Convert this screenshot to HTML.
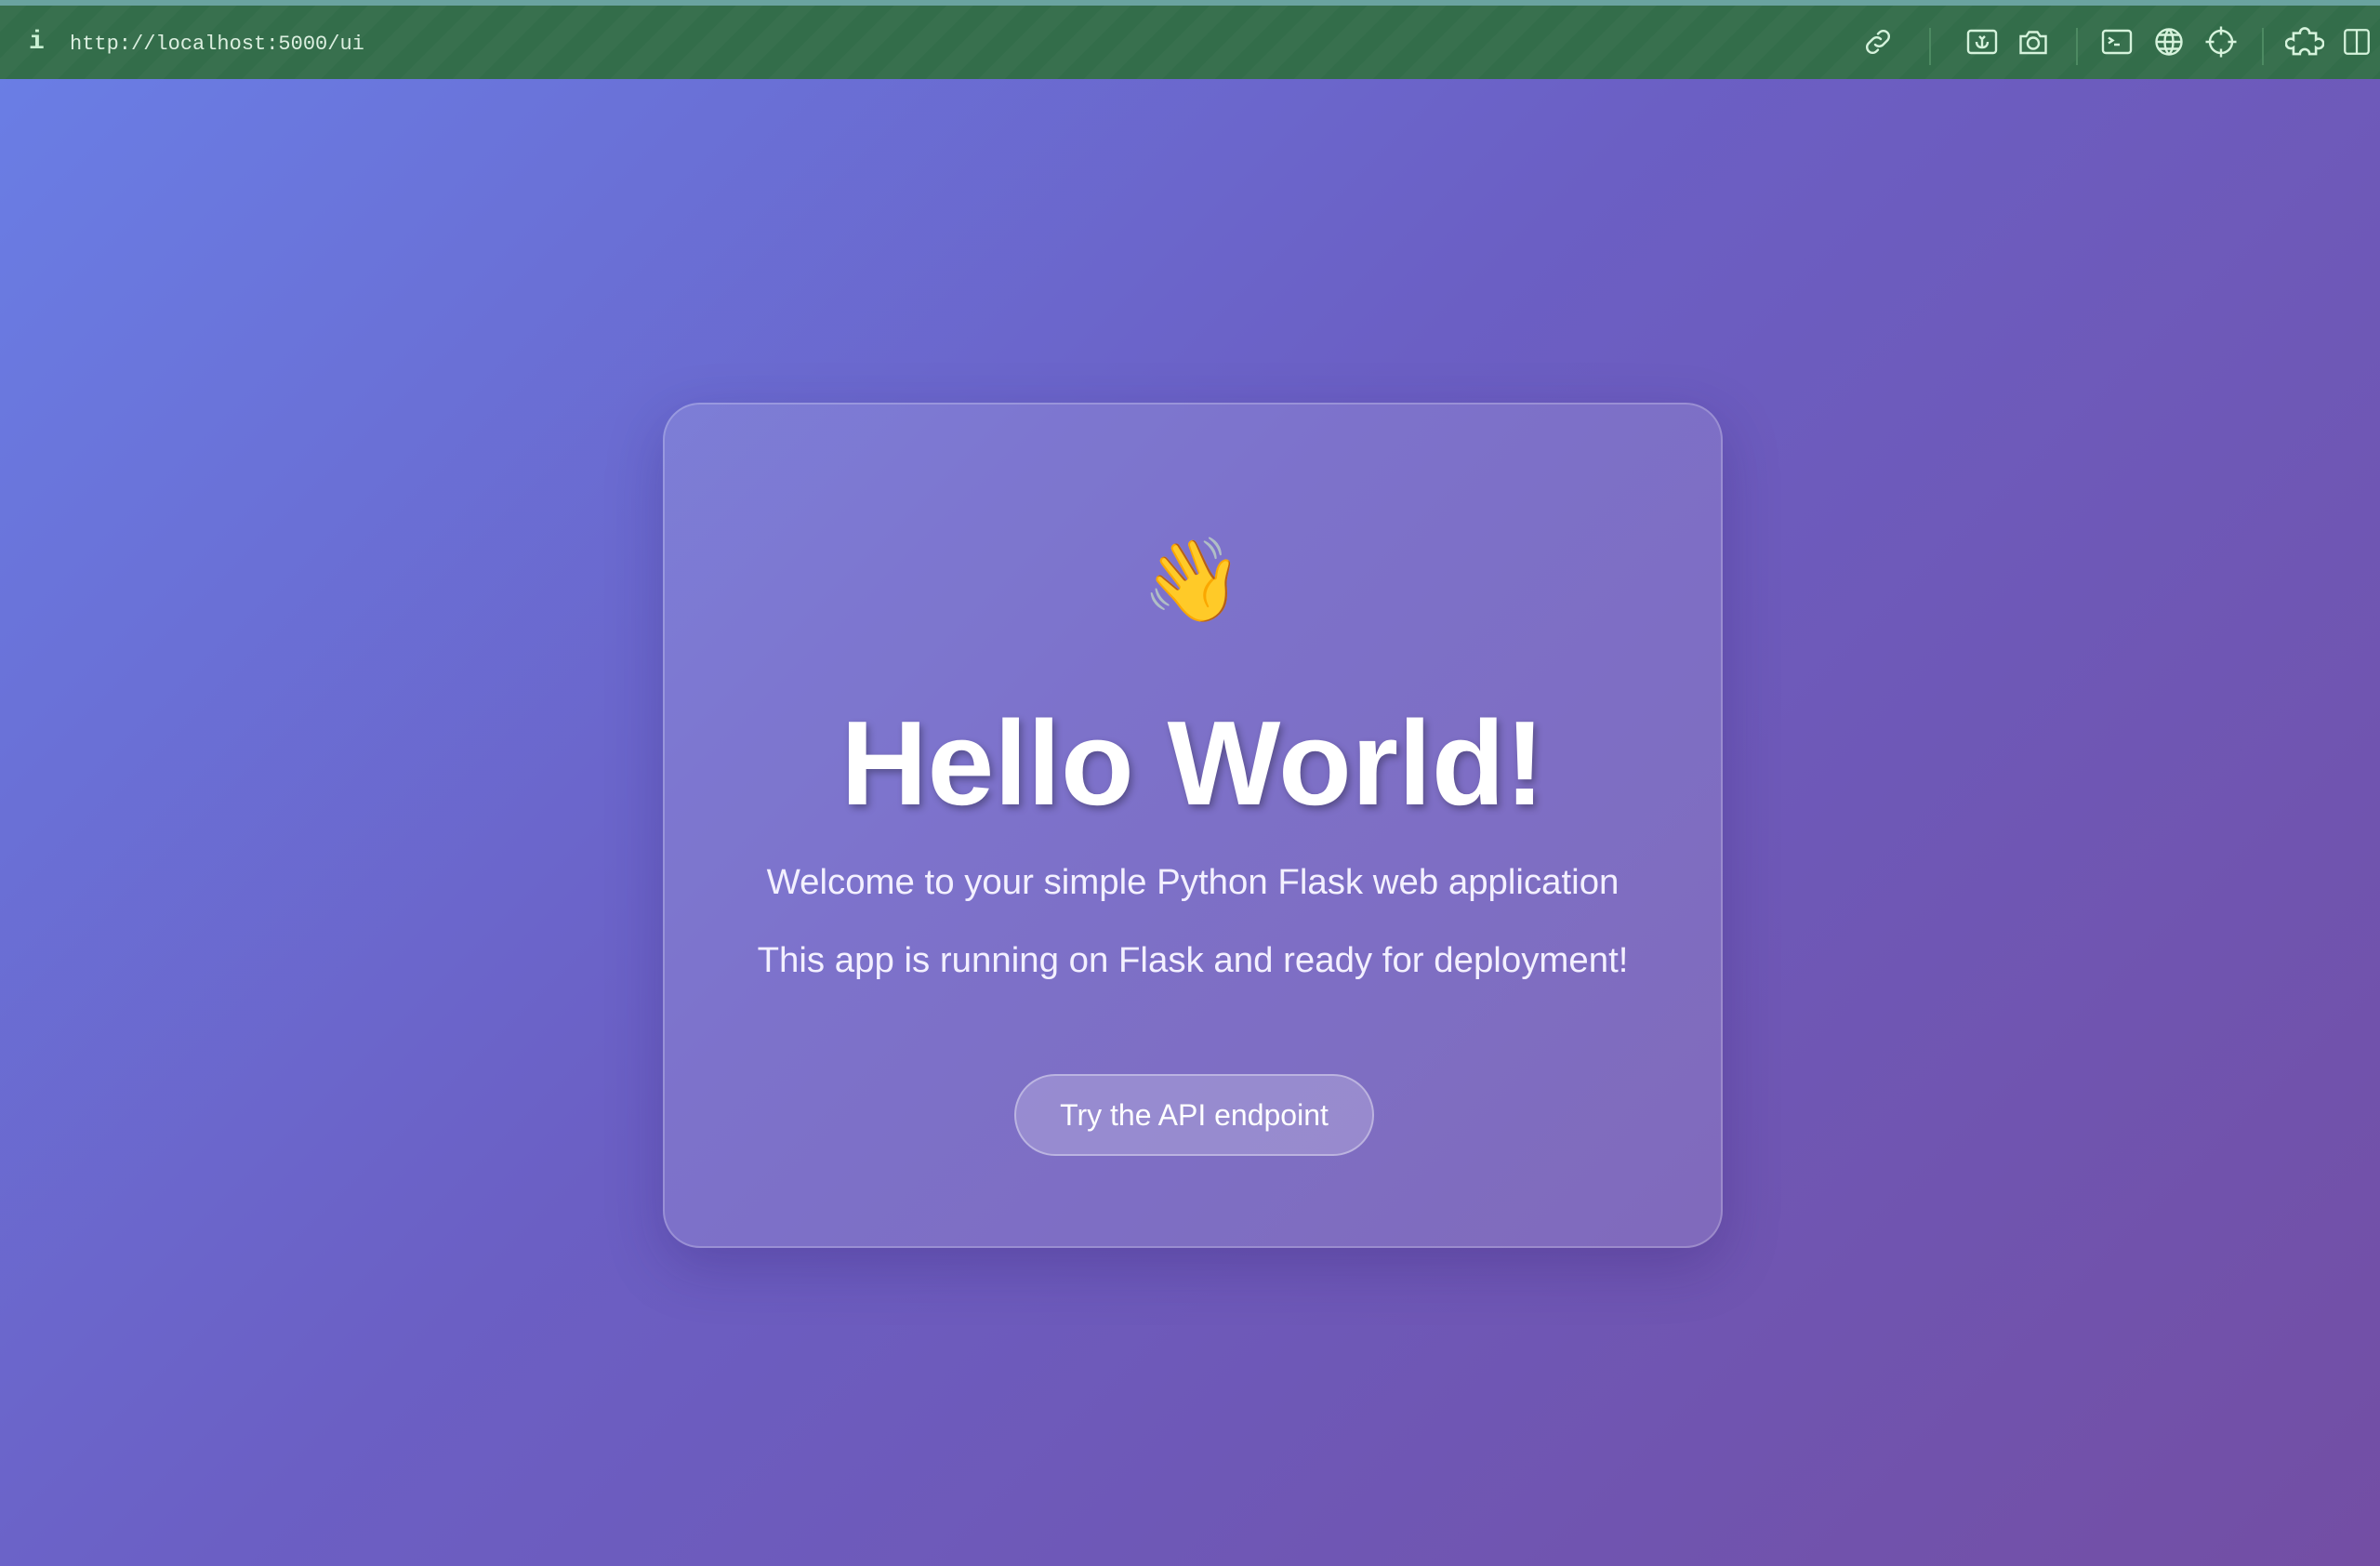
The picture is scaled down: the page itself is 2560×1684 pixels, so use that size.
<!DOCTYPE html>
<html><head><meta charset="utf-8"><style>
*{margin:0;padding:0;box-sizing:border-box}
html,body{width:2560px;height:1684px;overflow:hidden}
body{background:linear-gradient(135deg,#6a7fe6 0%,#6b5fc4 45%,#734ea4 100%);font-family:"Liberation Sans",Arial,sans-serif;position:relative}
.top{position:absolute;left:0;top:0;width:2560px;height:6px;background:#6aa3a0}
.bar{position:absolute;left:0;top:6px;width:2560px;height:79px;background:#336d4a;background-image:repeating-linear-gradient(135deg,rgba(255,255,255,0.025) 0 20px,rgba(0,0,0,0) 20px 40px)}
.info{position:absolute;left:31px;top:24px;color:#c9f0d2;font:bold 28px "Liberation Mono",monospace}
.url{position:absolute;left:75px;top:29px;color:#dcefe0;font:22px "Liberation Mono",monospace}
.ic{position:absolute;top:21px}
.sep{position:absolute;top:24px;width:2px;height:40px;background:#4d8a62}
.card{position:absolute;left:713px;top:433px;width:1140px;height:909px;border-radius:40px;background:rgba(255,255,255,0.12);border:2px solid rgba(255,255,255,0.22);box-shadow:0 20px 60px rgba(40,20,100,0.25);text-align:center;color:#fff}
.emoji{position:absolute;left:0;right:0;top:140px;font-size:88px;line-height:100px;font-family:"Noto Color Emoji","DejaVu Sans",sans-serif}
h1{position:absolute;left:0;right:0;top:306px;font-size:129px;font-weight:bold;line-height:160px;text-shadow:3px 4px 8px rgba(0,0,0,0.3)}
p{position:absolute;left:0;right:0;font-size:38.4px;line-height:44px;color:#f3f0ff}
.btn{position:absolute;left:376px;top:720px;width:387px;height:88px;border-radius:44px;background:rgba(255,255,255,0.2);border:2px solid rgba(255,255,255,0.35);font-size:32px;line-height:84px;color:#fff}
</style></head><body>
<div class="top"></div>
<div class="bar">
<div class="info">i</div>
<div class="url">http://localhost:5000/ui</div>
<svg class="ic" style="left:2002px" width="36" height="36" viewBox="0 0 24 24" fill="none" stroke="#d6f3dc" stroke-width="1.6" stroke-linecap="round"><path d="M10 14a4 4 0 0 0 5.7 0l3-3a4 4 0 0 0-5.7-5.7l-1 1"/><path d="M14 10a4 4 0 0 0-5.7 0l-3 3a4 4 0 0 0 5.7 5.7l1-1"/></svg>
<div class="sep" style="left:2075px"></div>
<svg class="ic" style="left:2114px" width="36" height="36" viewBox="0 0 24 24" fill="none" stroke="#d6f3dc" stroke-width="1.6"><rect x="2" y="4" width="20" height="16" rx="2"/><path d="M8 12c0 3 2 4 4 4s4-1 4-4M12 16v-6M10 8l2 2 2-2" /></svg>
<svg class="ic" style="left:2169px" width="36" height="36" viewBox="0 0 24 24" fill="none" stroke="#d6f3dc" stroke-width="1.6"><path d="M3 8h4l2-3h6l2 3h4v12H3z"/><circle cx="12" cy="13" r="4"/></svg>
<div class="sep" style="left:2233px"></div>
<svg class="ic" style="left:2259px" width="36" height="36" viewBox="0 0 24 24" fill="none" stroke="#d6f3dc" stroke-width="1.6"><rect x="2" y="4" width="20" height="16" rx="2"/><path d="M6 9l3 2-3 2M10 14h4"/></svg>
<svg class="ic" style="left:2315px" width="36" height="36" viewBox="0 0 24 24" fill="none" stroke="#d6f3dc" stroke-width="1.6"><circle cx="12" cy="12" r="9"/><path d="M3 12h18M12 3c-4 4-4 14 0 18M12 3c4 4 4 14 0 18M5 7h14M5 17h14"/></svg>
<svg class="ic" style="left:2371px" width="36" height="36" viewBox="0 0 24 24" fill="none" stroke="#d6f3dc" stroke-width="1.6"><circle cx="12" cy="12" r="8"/><path d="M12 1v6M12 17v6M1 12h6M17 12h6"/></svg>
<div class="sep" style="left:2433px"></div>
<svg class="ic" style="left:2458px" width="42" height="38" viewBox="0 0 24 22" fill="none" stroke="#d6f3dc" stroke-width="1.5"><path d="M5 5h4a3 3 0 1 1 6 0h4v4a3 3 0 1 1 0 5v4h-4a3 3 0 1 0-6 0H5v-4a3 3 0 1 1 0-5z"/></svg>
<svg class="ic" style="left:2518px" width="34" height="36" viewBox="0 0 24 24" fill="none" stroke="#d6f3dc" stroke-width="1.6"><rect x="3" y="3" width="18" height="18" rx="2"/><path d="M12 3v18"/></svg>
</div>
<div class="card">
<div class="emoji">👋</div>
<h1>Hello World!</h1>
<p style="top:492px">Welcome to your simple Python Flask web application</p>
<p style="top:576px">This app is running on Flask and ready for deployment!</p>
<div class="btn">Try the API endpoint</div>
</div>
</body></html>
